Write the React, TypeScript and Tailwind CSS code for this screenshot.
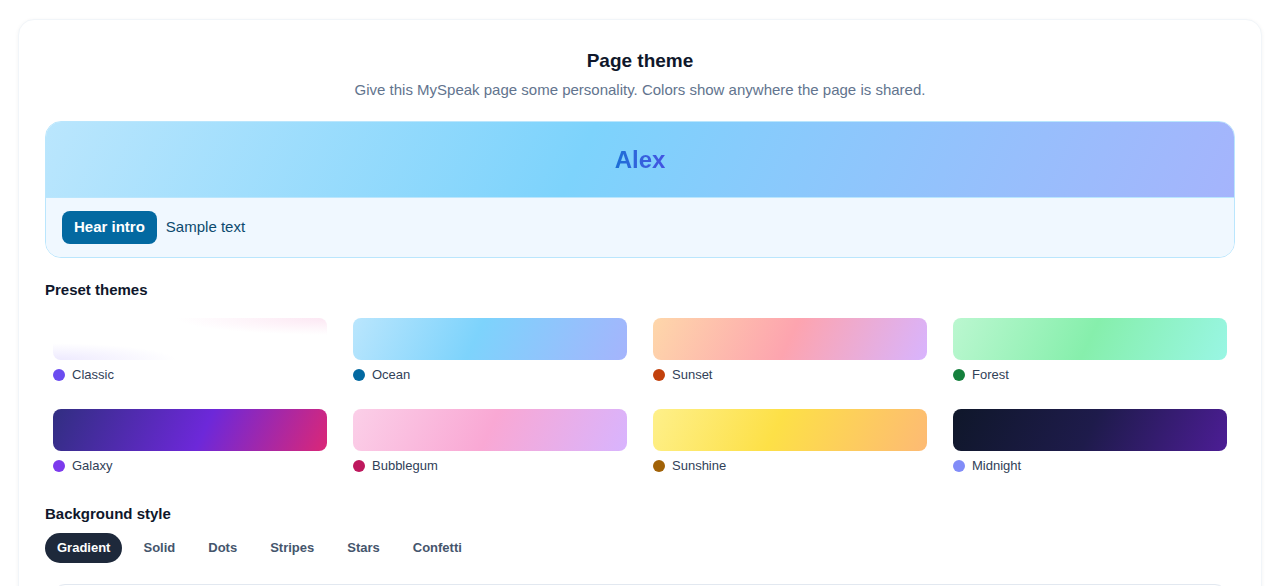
import React from "react";

const themes = [
  { name: "Classic", dot: "bg-[#6b4cf0]", sw: "bg-white bg-[radial-gradient(ellipse_55%_40%_at_100%_0%,#fce7f3_0%,rgba(255,255,255,0)_100%),radial-gradient(ellipse_45%_40%_at_0%_100%,#ede9fe_0%,rgba(255,255,255,0)_100%)]" },
  { name: "Ocean", dot: "bg-[#0369a1]", sw: "bg-[linear-gradient(115deg,#bae6fd,#7dd3fc_45%,#a5b4fc)]" },
  { name: "Sunset", dot: "bg-[#c2410c]", sw: "bg-[linear-gradient(115deg,#fed7aa,#fda4af_50%,#d8b4fe)]" },
  { name: "Forest", dot: "bg-[#15803d]", sw: "bg-[linear-gradient(115deg,#bbf7d0,#86efac_50%,#99f6e4)]" },
  { name: "Galaxy", dot: "bg-[#7c3aed]", sw: "bg-[linear-gradient(115deg,#312e81,#6d28d9_55%,#db2777)]" },
  { name: "Bubblegum", dot: "bg-[#be185d]", sw: "bg-[linear-gradient(115deg,#fbcfe8,#f9a8d4_50%,#d8b4fe)]" },
  { name: "Sunshine", dot: "bg-[#a16207]", sw: "bg-[linear-gradient(115deg,#fef08a,#fde047_45%,#fdba74)]" },
  { name: "Midnight", dot: "bg-[#818cf8]", sw: "bg-[linear-gradient(115deg,#0f172a,#1e1b4b_50%,#4c1d95)]" },
];

const styles = ["Gradient", "Solid", "Dots", "Stripes", "Stars", "Confetti"];

export default function App() {
  return (
    <div className="min-h-[586px] bg-white px-[18px] pt-[19px] font-['Liberation_Sans',Arial,sans-serif]">
      <div className="rounded-2xl border border-slate-100 bg-white px-[26px] pt-[29px] pb-8 shadow-[0_1px_4px_rgba(15,23,42,0.05)]">
        <h1 className="text-center text-[19px] font-bold leading-6 text-slate-900">Page theme</h1>
        <p className="mt-[6px] text-center text-[15px] leading-[22px] text-slate-500">
          Give this MySpeak page some personality. Colors show anywhere the page is shared.
        </p>

        <div className="mt-[20px] overflow-hidden rounded-2xl border border-[#bae6fd]">
          <div className="flex h-[75px] items-center justify-center bg-[linear-gradient(115deg,#bae6fd,#7dd3fc_45%,#a5b4fc)]">
            <span className="bg-gradient-to-r from-[#1a6fd6] to-[#4353e2] bg-clip-text text-[24px] font-bold text-transparent">
              Alex
            </span>
          </div>
          <div className="flex items-center gap-[9px] border-t border-[#bae6fd] bg-[#f0f8ff] px-4 pt-[13px] pb-[13px]">
            <button className="h-[33px] rounded-lg bg-[#0369a1] px-3 text-[15px] font-bold text-white">Hear intro</button>
            <span className="text-[15px] text-[#0c4a6e]">Sample text</span>
          </div>
        </div>

        <h2 className="mt-[23px] text-[15px] font-bold leading-[18px] text-slate-900">Preset themes</h2>
        <div className="mt-[11px] grid grid-cols-4 gap-[10px]">
          {themes.map((t) => (
            <div key={t.name} className="flex flex-col gap-[7px] rounded-xl p-2">
              <div className={`h-[42px] rounded-lg ${t.sw}`} />
              <div className="flex h-4 items-center gap-[7px]">
                <span className={`h-3 w-3 rounded-full ${t.dot}`} />
                <span className="text-[13px] text-slate-700">{t.name}</span>
              </div>
            </div>
          ))}
        </div>

        <h2 className="mt-[23px] text-[15px] font-bold leading-[18px] text-slate-900">Background style</h2>
        <div className="mt-[10px] flex items-center gap-[9px]">
          {styles.map((s, i) => (
            <button
              key={s}
              className={`h-[30px] rounded-full px-3 text-[13px] font-bold ${
                i === 0 ? "bg-[#1e293b] text-white" : "text-slate-600"
              }`}
            >
              {s}
            </button>
          ))}
        </div>

        <div className="mx-2 mt-[21px] h-24 rounded-xl border border-slate-200 bg-white" />
      </div>
    </div>
  );
}
